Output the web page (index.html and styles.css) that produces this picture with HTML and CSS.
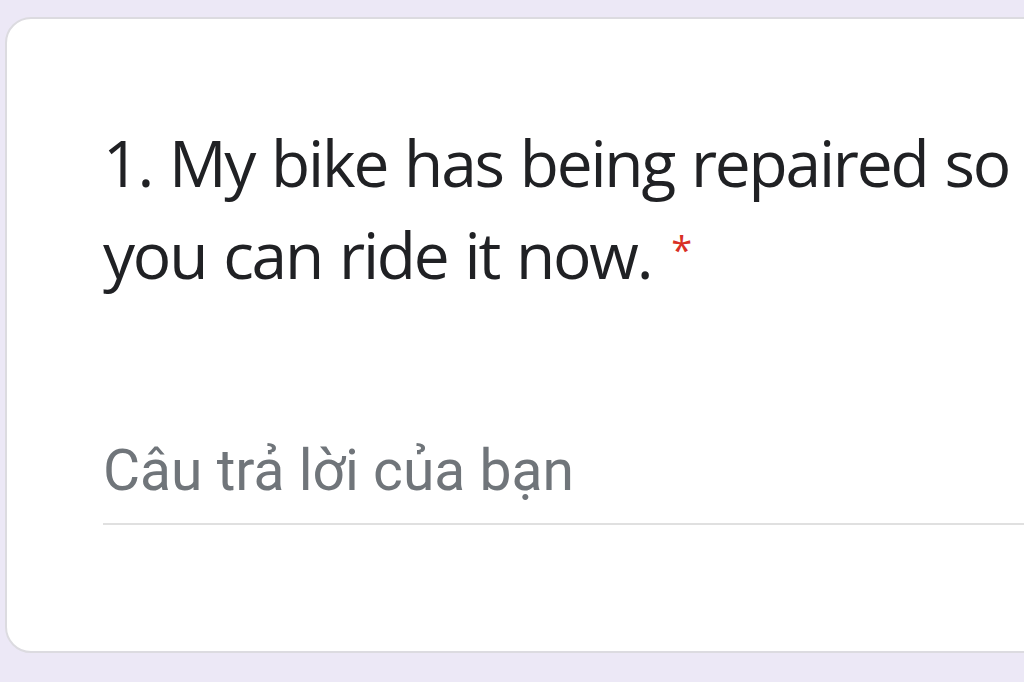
FILE: index.html
```html
<!DOCTYPE html>
<html>
<head>
    <title>Google Forms - Question</title>
    <link rel="stylesheet" href="styles.css">
</head>
<body>
    <div class="form-page">
        <div class="question-card">
            <div class="question-title">
                1. My bike has being repaired so you can ride it now.<span class="required">*</span>
            </div>
            <div class="answer-field">
                <input type="text" class="answer-input" placeholder="Câu trả lời của bạn">
            </div>
        </div>
    </div>
</body>
</html>
```
FILE: styles.css
```css
html, body {
    margin: 0;
    padding: 0;
    height: 100%;
    overflow: hidden;
}
body {
    background: #ece8f6;
    font-family: 'Open Sans', Roboto, sans-serif;
    color: #202124;
}
.form-page {
    padding: 17px 0 0 5px;
}
.question-card {
    width: 1120px;
    height: 636px;
    box-sizing: border-box;
    background: white;
    border: 2px solid #dcdbe0;
    border-radius: 26px;
    padding: 98px 0 0 96px;
}
.question-title {
    width: 930px;
    font-size: 64px;
    line-height: 92px;
    letter-spacing: -2.2px;
    word-spacing: 2.5px;
    color: #202124;
}
.required {
    color: #d93025;
    font-size: 38px;
    margin-left: 20px;
    position: relative;
    top: -15px;
}
.answer-field {
    margin-top: 127px;
    width: 940px;
}
.answer-input {
    display: block;
    width: 100%;
    height: 88px;
    box-sizing: border-box;
    border: none;
    border-bottom: 2px solid #e0e0e0;
    padding: 0 0 20px 0;
    font-family: Roboto, 'Open Sans', sans-serif;
    font-size: 57px;
    line-height: 66px;
    color: #202124;
    outline: none;
    background: transparent;
}
.answer-input::placeholder {
    color: #70757a;
}
```
